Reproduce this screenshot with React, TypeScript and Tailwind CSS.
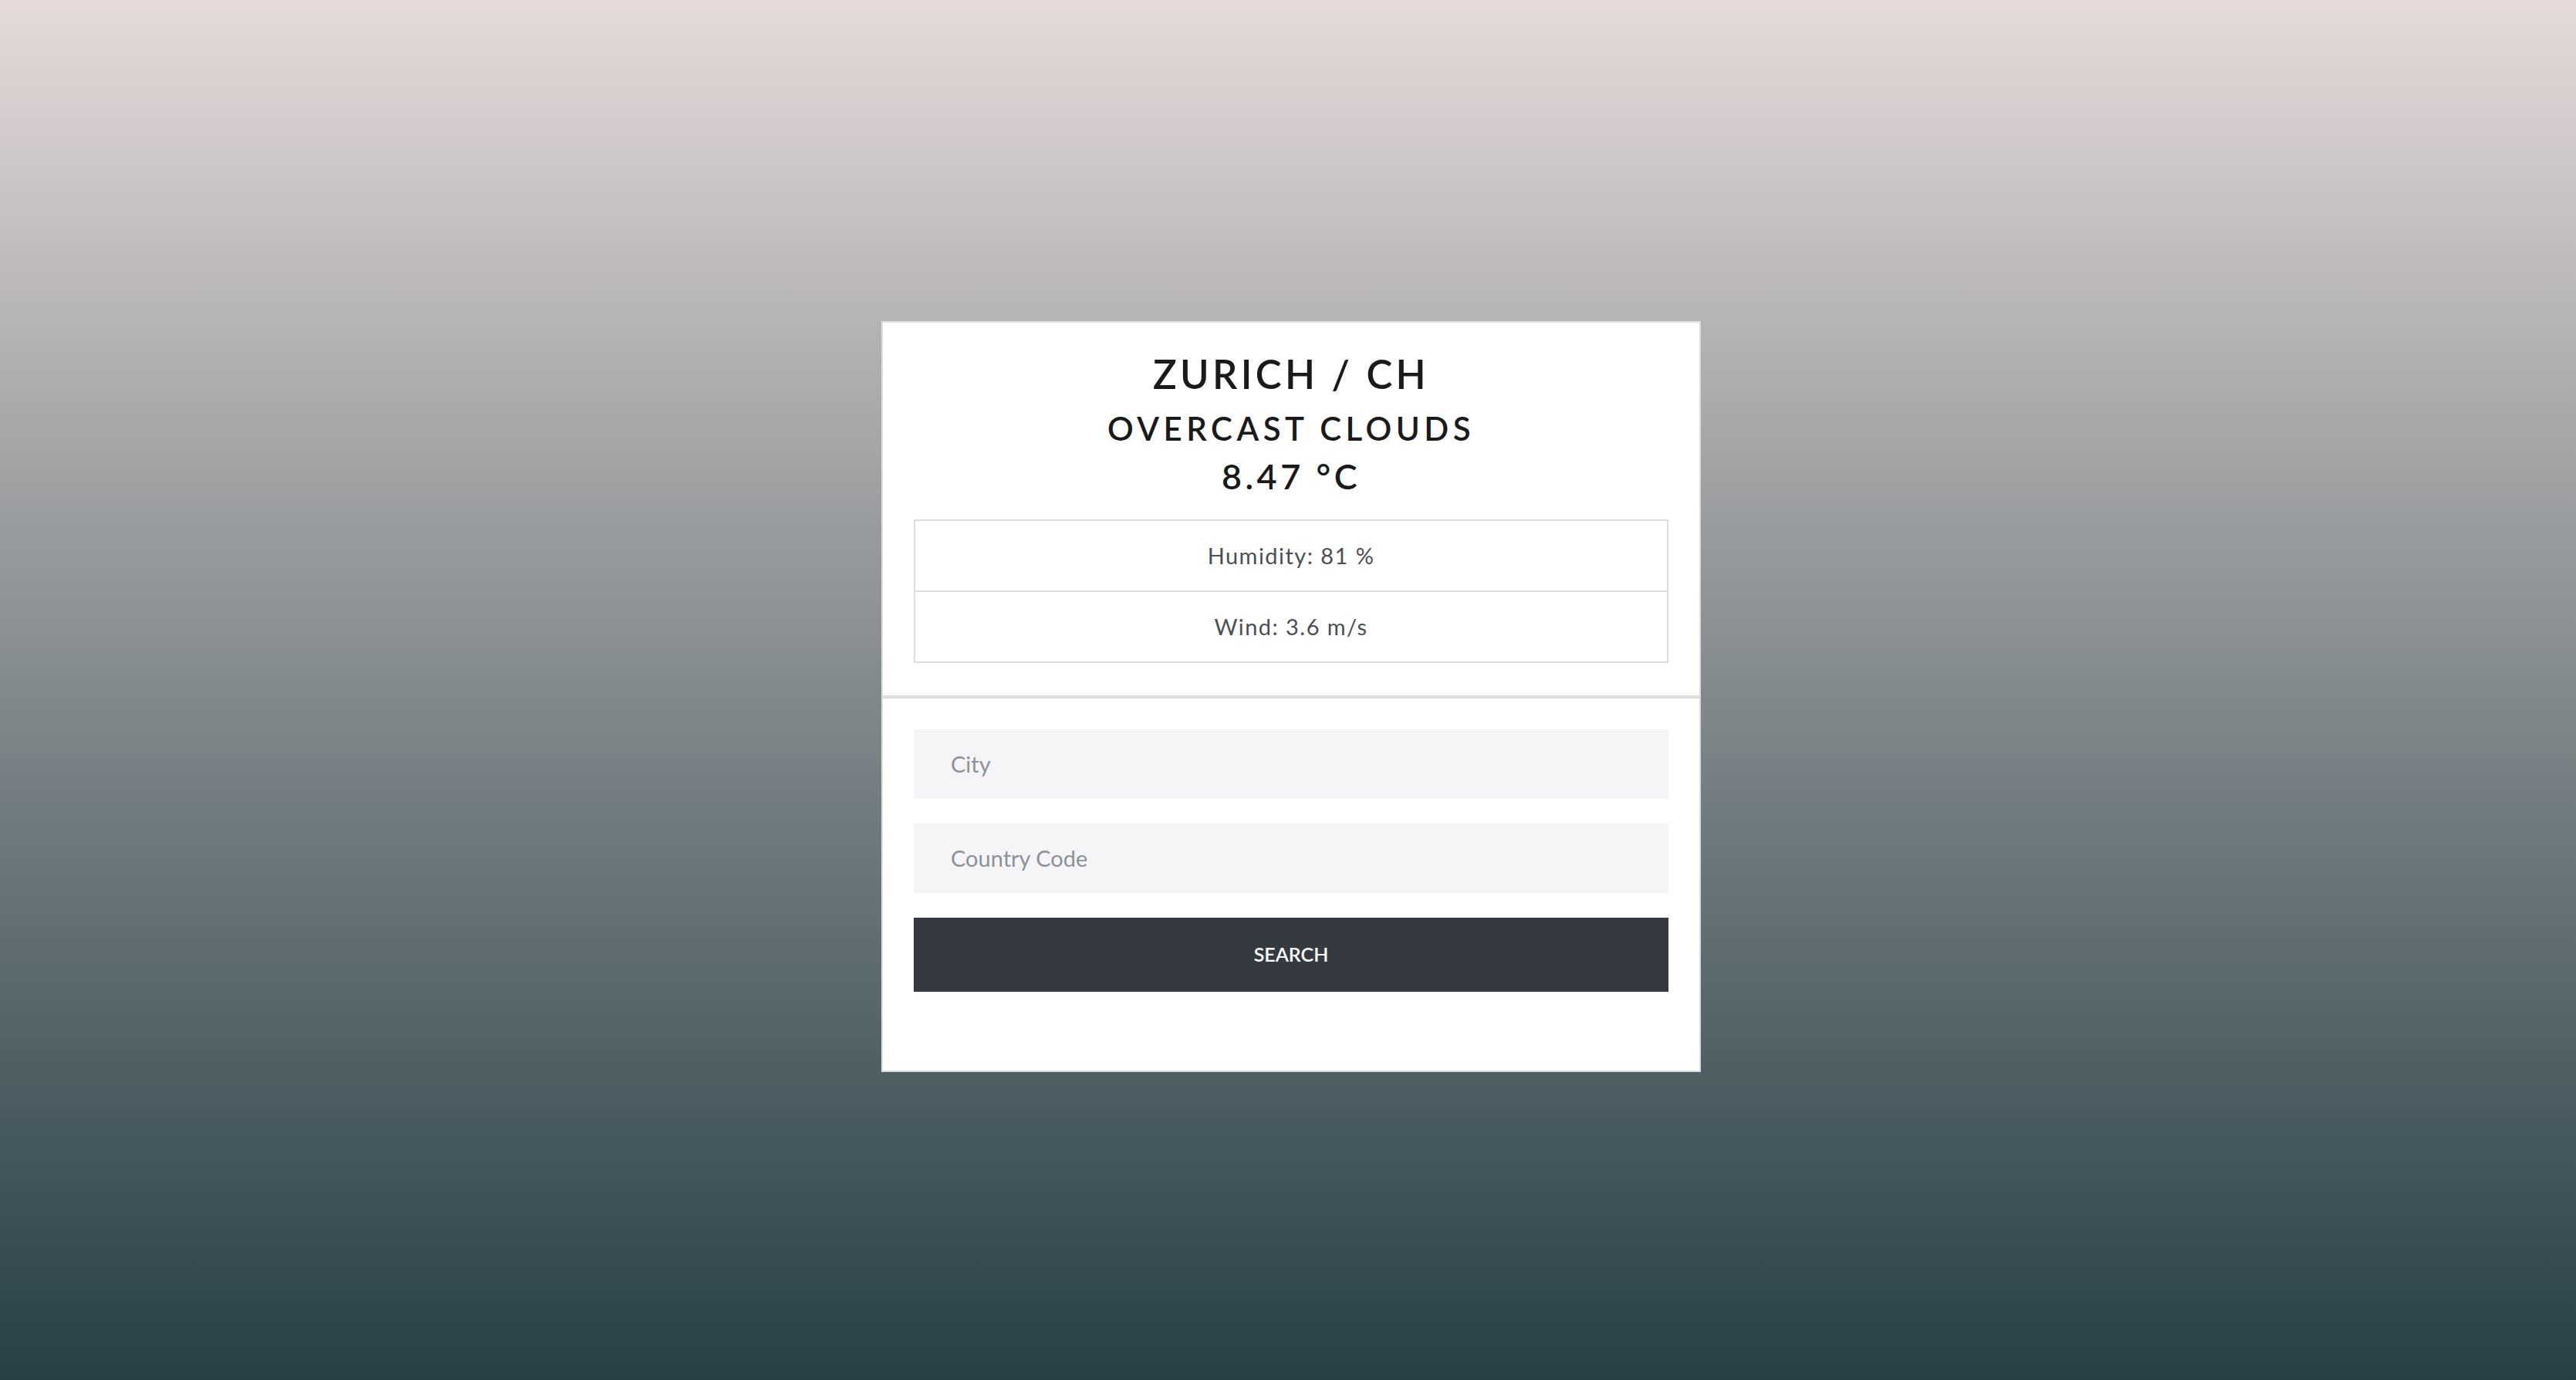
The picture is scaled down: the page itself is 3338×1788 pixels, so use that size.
import React from "react";

export default function App() {
  return (
    <div
      className="min-h-screen w-full bg-gradient-to-b from-[#e6dada] to-[#274046] flex flex-col items-center pt-[416px] pl-[8px]"
      style={{ fontFamily: "Lato, 'Open Sans', sans-serif" }}
    >
      <div className="w-[1062px] flex flex-col">
        <div className="bg-white border-2 border-[#dddddd] px-[40px] pt-[36px] pb-[42px] flex flex-col items-center">
          <h1 className="text-[51px] leading-[1.2] font-semibold tracking-[0.085em] text-[#1a1a1a]">
            ZURICH / CH
          </h1>
          <h2 className="mt-[15px] text-[42px] leading-[1.2] font-semibold tracking-[0.13em] text-[#1a1a1a]">
            OVERCAST CLOUDS
          </h2>
          <h3 className="mt-[9px] text-[45px] leading-[1.2] font-semibold tracking-[0.1em] text-[#1a1a1a]">
            8.47 °C
          </h3>
          <div className="mt-[29px] w-full border-2 border-[#dddddd] flex flex-col">
            <div className="h-[92px] flex items-center justify-center border-b-2 border-[#dddddd] text-[29px] tracking-[0.05em] text-[#4a4f55]">
              Humidity: 81 %
            </div>
            <div className="h-[90px] flex items-center justify-center text-[29px] tracking-[0.05em] text-[#4a4f55]">
              Wind: 3.6 m/s
            </div>
          </div>
        </div>
        <div className="bg-white border-2 border-t-2 border-[#dddddd] px-[40px] pt-[40px] pb-[102px] flex flex-col gap-[32px]">
          <input
            placeholder="City"
            className="h-[90px] w-full bg-[#f5f5f7] pl-[48px] text-[29px] text-[#333] placeholder:text-[#8b9298] outline-none"
          />
          <input
            placeholder="Country Code"
            className="h-[90px] w-full bg-[#f5f5f7] pl-[48px] text-[29px] text-[#333] placeholder:text-[#8b9298] outline-none"
          />
          <button className="h-[96px] w-full bg-[#343a40] text-white text-[25px] font-semibold">
            SEARCH
          </button>
        </div>
      </div>
    </div>
  );
}
